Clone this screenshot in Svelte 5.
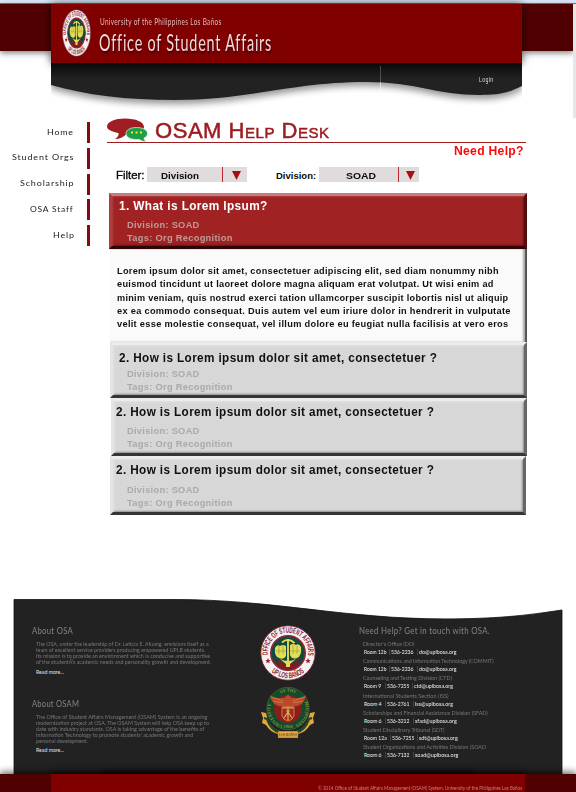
<script>
  // Stretches a line of text horizontally to the given width.
  function fit(node, width) {
    node.style.transform = `scaleX(${width / node.offsetWidth})`;
    const box = node.parentElement;
    box.style.width = `${width}px`;
  }

  const nav = [
    ['Home', 27],
    ['Student Orgs', 62.5],
    ['Scholarship', 54],
    ['OSA Staff', 44],
    ['Help', 21.5]
  ];

  const answer = [
    ['Lorem ipsum dolor sit amet, consectetuer adipiscing elit, sed diam nonummy nibh', 382],
    ['euismod tincidunt ut laoreet dolore magna aliquam erat volutpat. Ut wisi enim ad', 377],
    ['minim veniam, quis nostrud exerci tation ullamcorper suscipit lobortis nisl ut aliquip', 391],
    ['ex ea commodo consequat. Duis autem vel eum iriure dolor in hendrerit in vulputate', 394],
    ['velit esse molestie consequat, vel illum dolore eu feugiat nulla facilisis at vero eros', 391]
  ];

  const about = [
    {
      title: 'About OSA',
      w: 41,
      lines: [
        ['The OSA, under the leadership of Dr. Leticia E. Afuang, envisions itself as a', 173],
        ['team of excellent service providers producing empowered UPLB students.', 169.5],
        ['Its mission is to provide an environment which is conducive and supportive', 174.5],
        ['of the studentÂ’s academic needs and personality growth and development.', 175.5]
      ]
    },
    {
      title: 'About OSAM',
      w: 47,
      lines: [
        ['The Office of Student Affairs Management (OSAM) System is an ongoing', 171],
        ['modernization project at OSA. The OSAM System will help OSA keep up to', 173],
        ['date with industry standards. OSA is taking advantage of the benefits of', 168],
        ["Information Technology to promote students' academic growth and", 157],
        ['personal development.', 52]
      ]
    }
  ];

  const contacts = [
    ["Director's Office (DO)", 51, 'Room 12b', 22, '536-2236', 'do@uplbosa.org', 38],
    ['Communications and Information Technology (COMMIT)', 131, 'Room 12b', 22, '536-2236', 'do@uplbosa.org', 38],
    ['Counseling and Testing Division (CTD)', 88.5, 'Room 9', 17.5, '536-7255', 'ctd@uplbosa.org', 39],
    ['International Students Section (ISS)', 85.5, 'Room 4', 18, '536-2761', 'iss@uplbosa.org', 37.5],
    ['Scholarships and Financial Assistance Division (SFAD)', 124.5, 'Room 6', 18, '536-3212', 'sfad@uplbosa.org', 41.5],
    ['Student Disciplinary Tribunal (SDT)', 82, 'Room 12a', 22.5, '536-7255', 'sdt@uplbosa.org', 39],
    ['Student Organizations and Activities Division (SOAD', 122.5, 'Room 6', 18, '536-7132', 'soad@uplbosa.org', 43]
  ];
</script>

{#snippet t(text, width, cls = '')}
  <span class="fit {cls}"><span use:fit={width}>{text}</span></span>
{/snippet}

{#snippet osaSeal(id)}
  <svg class="osa-seal" viewBox="0 0 56 56" preserveAspectRatio="none">
    <defs>
      <path id="{id}-top" d="M8.6 34 A20.3 20.3 0 1 1 47.4 34" />
      <path id="{id}-bottom" d="M8 43.300 A25.300 25.300 0 0 0 48 43.300" />
    </defs>
    <circle cx="28" cy="28" r="27.2" fill="#f6f1f1" stroke="#7b2430" stroke-width=".8" />
    <circle cx="28" cy="28" r="17.2" fill="#124a3c" stroke="#8e2534" stroke-width="1.6" />
    <path d="M17 33 Q28 45 39 33 L38 41 Q28 48 18 41Z" fill="#7d1c24" />
    <path d="M28 14v24M22 17.5Q28 12 34.5 18" fill="none" stroke="#e9e05a" stroke-width="1.8" />
    <path d="M15 23q2-4 5-2 3-2 6 0v10q-2 4-7 2-5-2-4-10zM41 22q-2-4-5-2-3-2-6 0v10q2 5 7 3 5-2 4-11z" fill="#e2dc56" />
    <path d="M20 34q8 4 16 0l-6 5v3h-4v-3z" fill="#e2dc56" />
    <path d="M16 26h10M30 26h10M19 21v8M23 20v9M33 20v9M37 21v8" stroke="#9c983b" stroke-width=".6" />
    <path d="M8 33l.8 1.900 2 .1-1.600 1.300.6 2-1.800-1.100-1.800 1.100.6-2-1.600-1.300 2-.1zM48 33l.8 1.900 2 .1-1.600 1.300.6 2-1.800-1.100-1.800 1.100.6-2-1.600-1.300 2-.1z" fill="#9e1a2b" />
    <text class="seal-text"><textPath href="#{id}-top" startOffset="4" textLength="68" lengthAdjust="spacingAndGlyphs">OFFICE OF STUDENT AFFAIRS</textPath></text>
    <text class="seal-text"><textPath href="#{id}-bottom" startOffset="5" textLength="36" lengthAdjust="spacingAndGlyphs">UP LOS BAÑOS</textPath></text>
  </svg>
{/snippet}

{#snippet question(title, w, cls)}
  <section class="panel {cls}">
    <h2>{@render t(title, w)}</h2>
    <p>{@render t('Division: SOAD', 73)}</p>
    <p>{@render t('Tags: Org Recognition', 105.5)}</p>
  </section>
{/snippet}

{#snippet select(text, w, pad, cls)}
  <div class="select">
    <div class="value" style:padding-left="{pad}px">{@render t(text, w)}</div>
    <div class="arrow {cls}"><svg viewBox="0 0 9 9"><path d="M0 0h9L4.500 9z" /></svg></div>
  </div>
{/snippet}

<div class="page">
  <div class="strip"></div>
  <header>
    <div class="band left"></div>
    <div class="center">
      <div class="brand">
        {@render osaSeal('head')}
        <div class="names">
          <div class="univ">{@render t('University of the Philippines Los Baños', 121.5)}</div>
          <h1>{@render t('Office of Student Affairs', 173)}</h1>
        </div>
      </div>
      <div class="wave">
        <svg viewBox="0 0 471 55">
          <defs>
            <linearGradient id="dark" x2="0" y2="1"><stop stop-color="#080808" /><stop offset=".42" stop-color="#222" /></linearGradient>
            <filter id="soft" x="-5%" y="-20%" width="110%" height="160%"><feGaussianBlur stdDeviation="3.500" /></filter>
          </defs>
          <path d="M0 0H471V23C455 31 445 32 429 32C385 32 365 19 315 19C240 19 200 37 124 37C75 37 35 32 0 22Z" transform="translate(0 4)" fill="#000" opacity=".42" filter="url(#soft)" />
          <path d="M0 0H471V23C455 31 445 32 429 32C385 32 365 19 315 19C240 19 200 37 124 37C75 37 35 32 0 22Z" fill="url(#dark)" />
          <path d="M329.500 3v16" stroke="#aaa" stroke-width=".8" opacity=".45" />
          <path d="M329.500 19v12" stroke="#fff" stroke-width="1" opacity=".5" />
        </svg>
        <span class="login">{@render t('Login', 14.5)}</span>
      </div>
    </div>
    <div class="band right"></div>
    <div class="scroll"></div>
  </header>

  <main>
    <nav>
      {#each nav as [label, w]}
        <a href="#top">{@render t(label, w)}</a>
      {/each}
    </nav>
    <div class="content">
      <div class="title">
        <svg viewBox="0 0 40 24" width="40" height="24">
          <path d="M18 0.500C29 .5 37 4 37 9S29 15.500 20 15.500C17 19 13 21 8 21C11 19 12 17 11.500 15C4 13.500 0 11.500 0 8.500C0 4 8 .5 18 .5Z" fill="#a01d22" />
          <path d="M29.500 9.500C36 9.500 40.500 12 40.500 15.500C40.500 18 39 19 37 20C37 22 38 23 40 23.500C37 23.800 34 23 32.500 21.500C25 22 19 20 19 15.500C19 12 23 9.500 29.500 9.500Z" fill="#1fa047" stroke="#fff" stroke-width=".6" />
          <path d="M24 14.500h2M28.500 14.500h2M33 14.500h2" stroke="#f1ec31" stroke-width="2" />
        </svg>
        <div class="osam">{@render t('OSAM Help Desk', 174.5)}</div>
      </div>
      <div class="need">{@render t('Need Help?', 70)}</div>
      <div class="filters">
        <div class="filter">{@render t('Filter:', 29)}</div>
        {@render select('Division', 38, 14, '')}
        <div class="division">{@render t('Division:', 40)}</div>
        {@render select('SOAD', 29.5, 26.5, 'wide')}
      </div>

      {@render question('1. What is Lorem Ipsum?', 148.5, 'red')}
      <div class="answer">
        {#each answer as [line, w]}
          <div>{@render t(line, w)}</div>
        {/each}
      </div>
      {@render question('2. How is Lorem ipsum dolor sit amet, consectetuer ?', 318, 'gray q2')}
      {@render question('2. How is Lorem ipsum dolor sit amet, consectetuer ?', 318, 'gray q3')}
      {@render question('2. How is Lorem ipsum dolor sit amet, consectetuer ?', 318, 'gray q4')}
    </div>
  </main>

  <footer>
    <div class="dark">
      <svg class="curve" viewBox="0 0 548 176" preserveAspectRatio="none"><path d="M0 .5H160C260 .5 330 20 430 20C480 20 510 17 548 11V176H0Z" fill="#222" stroke="#111" stroke-width=".8" /></svg>
      <div class="about">
        {#each about as block}
          <section>
            <h3>{@render t(block.title, block.w)}</h3>
            {#each block.lines as [line, w]}
              <div class="small">{@render t(line, w)}</div>
            {/each}
            <div class="more">{@render t('Read more...', 28)}</div>
          </section>
        {/each}
      </div>
      <div class="seals">
        {@render osaSeal('foot')}
        <svg class="up-seal" viewBox="0 0 56 52">
          <defs>
            <path id="up-top" d="M15 10.400A17.500 17.500 0 0 1 41 10.400" />
            <path id="up-left" d="M22.500 38.500A17.500 17.500 0 0 1 11.500 15" />
            <path id="up-right" d="M44.500 15A17.500 17.500 0 0 1 33.500 38.500" />
          </defs>
          <path d="M1 25l5 1Q10 42 20 44h16Q46 42 50 26l5-1-2 6 1 5-4 2q-4 7-12 9v4H18v-4Q10 45 6 38l-4-2 1-5z" fill="#e5a63c" />
          <path d="M4 31l3 1q4 11 12 13M52 31l-3 1q-4 11-12 13" fill="none" stroke="#17492f" stroke-width="2.200" />
          <circle cx="28" cy="21.500" r="21.200" fill="#124d2b" stroke="#526c3c" stroke-width=".6" />
          <circle cx="28" cy="22" r="14" fill="#8c1d1d" />
          <path d="M10 8.500q7 4 15 2l3-3 3 3q8 2 15-2-2 11-13 11l-3 3h-4l-3-3Q12 19.500 10 8.500z" fill="#b8492b" />
          <path d="M11 10l12 4M13 14l10 2M45 10l-12 4M43 14l-10 2" stroke="#e49650" stroke-width=".6" />
          <path d="M22 20h12v9q-1 4-6 5-5-1-6-5z" fill="#9d2820" stroke="#dc9a43" stroke-width=".8" />
          <path d="M22.500 21h11M28 21v12M24 31l4-6 4 6M26 24h4" stroke="#e3b35b" stroke-width="1.200" fill="none" />
          <text class="up-text"><textPath href="#up-top" startOffset="7" textLength="15">OF THE</textPath></text>
          <text class="up-text"><textPath href="#up-left" textLength="27">UNIVERSITY</textPath></text>
          <text class="up-text"><textPath href="#up-right" textLength="27">PHILIPPINES</textPath></text>
          <text class="up-text" x="23.500" y="40.500" textLength="9">1908</text>
          <rect x="18" y="44.500" width="20" height="5.500" fill="#efb24a" stroke="#9d5c20" stroke-width=".5" />
          <text class="ribbon" x="19" y="48.700" textLength="18">LOS BAÑOS</text>
        </svg>
      </div>
      <div class="contact">
        <h3>{@render t('Need Help? Get in touch with OSA.', 130.5)}</h3>
        {#each contacts as [office, ow, room, rw, phone, mail, mw]}
          <div class="office">{@render t(office, ow)}</div>
          <div class="detail">
            {@render t(room, rw)}<i></i>{@render t(phone, 22.5)}<i></i>{@render t(mail, mw)}
          </div>
        {/each}
      </div>
    </div>
    <div class="bar">
      <div class="copy">{@render t('© 2014 Office of Student Affairs Management (OSAM) System. University of the Philippines Los Baños', 204)}</div>
    </div>
  </footer>
</div>

<style>
  :global(body) { background: #fff; }
  .page { width: 576px; height: 792px; overflow: hidden; display: flex; flex-direction: column; font-family: "Liberation Sans", Arial, sans-serif; }
  h1, h2, h3, p { margin: 0; font-weight: inherit; font-size: inherit; }
  .fit { display: inline-block; white-space: nowrap; flex: none; vertical-align: top; }
  .fit > span { display: inline-block; transform-origin: 0 0; vertical-align: top; }
  svg { display: block; overflow: visible; }

  .strip { height: 3px; background: #d9e7f6; border-bottom: 1px solid #7e7078; flex: none; }
  header { display: flex; height: 114px; flex: none; align-items: flex-start; }
  .band { height: 47px; background: #500000; box-shadow: 0 2px 6px rgba(0, 0, 0, .5); }
  .band.left { width: 51px; }
  .band.right { width: 51px; }
  .center { width: 471px; position: relative; z-index: 1; }
  .scroll { width: 3px; height: 114px; background: #e5e7eb; margin-left: auto; }
  .brand { height: 59px; background: #800000; display: flex; box-shadow: 0 0 8px rgba(0, 0, 0, .75); padding-left: 11px; box-sizing: border-box; }
  .brand .osa-seal { width: 29px; height: 48px; margin-top: 5px; }
  .names { margin-left: 9px; font-family: Lato, sans-serif; color: #efdada; }
  .univ { height: 12px; line-height: 12px; margin-top: 11px; font-size: 10px; letter-spacing: .5px; color: #dfbdbd; }
  h1 { font-size: 22.500px; letter-spacing: 1.200px; line-height: 26px; margin: 3px 0 0 -1px; text-shadow: 1px 2px 2px rgba(0, 0, 0, .5); }
  .wave { position: relative; height: 55px; }
  .wave svg { width: 471px; height: 55px; clip-path: inset(0 0 -10px 0); }
  .login { position: absolute; left: 428px; top: 12px; font: 7.500px/10px Roboto, sans-serif; letter-spacing: .5px; color: #ddd; }

  main { display: flex; flex: none; }
  nav { width: 90px; padding-top: 4px; display: flex; flex-direction: column; gap: 4.800px; }
  nav a { height: 21px; border-right: 3.500px solid #860b0e; display: flex; align-items: center; justify-content: flex-end; padding-right: 13px; font: 7.500px/10px Lato, sans-serif; letter-spacing: .7px; color: #222; text-decoration: none; }
  .content { width: 420px; margin-left: 17px; }
  .title { height: 24px; width: 418.500px; display: flex; border-bottom: 1px solid #9d1c20; }
  .title svg { flex: none; }
  .osam { margin-left: 8px; font-size: 22px; line-height: 25px; font-variant: small-caps; letter-spacing: .5px; color: #9d1c20; -webkit-text-stroke: .5px #9d1c20; }
  .need { height: 24px; line-height: 17px; display: flex; justify-content: flex-end; padding-right: 3px; font-size: 12.500px; font-weight: bold; letter-spacing: .3px; color: #f90a0a; }
  .filters { display: flex; height: 26px; color: #0b0b0b; align-items: flex-start; }
  .filter { width: 31px; padding-left: 9px; font-size: 11px; line-height: 17px; -webkit-text-stroke: .35px; }
  .division { width: 43px; padding-left: 29px; font-size: 9.500px; font-weight: bold; line-height: 17px; }
  .select { width: 100px; height: 15px; background: #e0dcdc; display: flex; font-size: 9.500px; line-height: 17px; font-weight: bold; }
  .value { width: 75px; box-sizing: border-box; flex: none; }
  .arrow { flex: 1; border-left: 1px solid #c02a2d; padding: 4px 0 0 8.500px; }
  .arrow.wide { margin-left: 4px; padding-left: 6.500px; }
  .arrow svg { width: 9px; height: 9px; fill: #a70f12; }

  .panel { box-sizing: border-box; border: 3px solid; margin-left: 3px; width: 417px; font-weight: bold; }
  .panel h2 { font-size: 12.500px; line-height: 16px; letter-spacing: .4px; }
  .panel p { font-size: 9.800px; line-height: 13px; padding-left: 14px; height: 13px; letter-spacing: .3px; }
  .red { height: 56px; margin-left: 2px; width: 418px; background: #a12222; border-color: #c97c7d #540c0e #2d0507 #b03c3d; color: #fff; box-shadow: inset 1px 1px 2px #b04040, inset -1px -1px 2px #611214; }
  .red h2 { margin: 2px 0 4px 7px; }
  .red p { color: #bf9a98; padding-left: 15px; }
  .gray { background: #d7d7d7; border-color: #ececec #666 #353535 #e4e4e4; color: #101010; box-shadow: inset 1px 1px 2px #e2e2e2, inset -1px -1px 2px #888; }
  .gray p { color: #aaa; }
  .q2 { height: 56px; }
  .q2 h2 { margin: 5px 0 1px 6px; }
  .q3 { height: 58px; margin-left: 4px; width: 416px; }
  .q3 h2 { margin: 3px 0 4px 2px; }
  .q3 p { padding-left: 13px; }
  .q4 { height: 59px; width: 416px; }
  .q4 h2 { margin: 3px 0 5px 3px; }
  .answer { height: 93px; width: 417px; box-sizing: border-box; margin-left: 3px; background: #fafafa; border-right: 2px solid #555; box-shadow: inset -2px 0 2px #aaa; padding: 15px 0 0 7px; font-size: 9.500px; font-weight: bold; letter-spacing: .3px; color: #111; }
  .answer div { height: 13.250px; line-height: 14px; }

  footer { margin-top: auto; height: 193px; flex: none; font-family: Lato, sans-serif; }
  .dark { position: relative; height: 175px; margin-left: 14px; width: 548px; display: flex; color: #787878; }
  .curve { position: absolute; inset: 0; width: 548px; height: 175px; }
  .about, .seals, .contact { position: relative; }
  .about { width: 246px; padding: 27px 0 0 18px; box-sizing: border-box; }
  h3 { font-size: 8.500px; line-height: 11px; height: 15px; color: #858585; letter-spacing: .3px; }
  .small { font-size: 5.200px; line-height: 6px; height: 5.900px; padding-left: 4px; }
  .more { font-size: 5.200px; line-height: 6px; padding: 4px 0 0 4px; color: #e4e4e4; }
  .about section { height: 73px; }
  .seals { width: 99px; }
  .seals .osa-seal { width: 56px; height: 56px; margin-top: 26px; }
  .up-seal { width: 56px; height: 52px; margin-top: 6px; }
  .seals svg { margin-left: -.5px; }
  .seal-text { font: bold 8px "Liberation Sans", sans-serif; fill: #8a1c2b; }
  .up-text { font: 4.200px "Liberation Serif", serif; fill: #c9b04f; }
  .ribbon { font: bold 3.500px "Liberation Serif", serif; fill: #684010; }
  .contact { padding-top: 27px; }
  .office { font-size: 5.200px; line-height: 7px; height: 8px; padding-left: 4px; }
  .detail { display: flex; font-size: 5.200px; line-height: 7px; height: 9.200px; padding-left: 5px; color: #eee; }
  .detail i { width: 0; height: 6px; border-left: 1px solid #444; margin: 0 1px 0 3px; }
  .bar { position: relative; height: 18px; margin: 0 51px; background: #800000; box-shadow: -51px 0 0 #500000, 54px 0 0 #500000, 0 -1px 6px 1px rgba(0, 0, 0, .5), -51px -2px 7px rgba(0, 0, 0, .6), 51px -2px 7px rgba(0, 0, 0, .6); }
  .copy { font-size: 4.800px; line-height: 6px; padding-top: 11px; color: #c28080; display: flex; justify-content: flex-end; padding-right: 3px; }
</style>
